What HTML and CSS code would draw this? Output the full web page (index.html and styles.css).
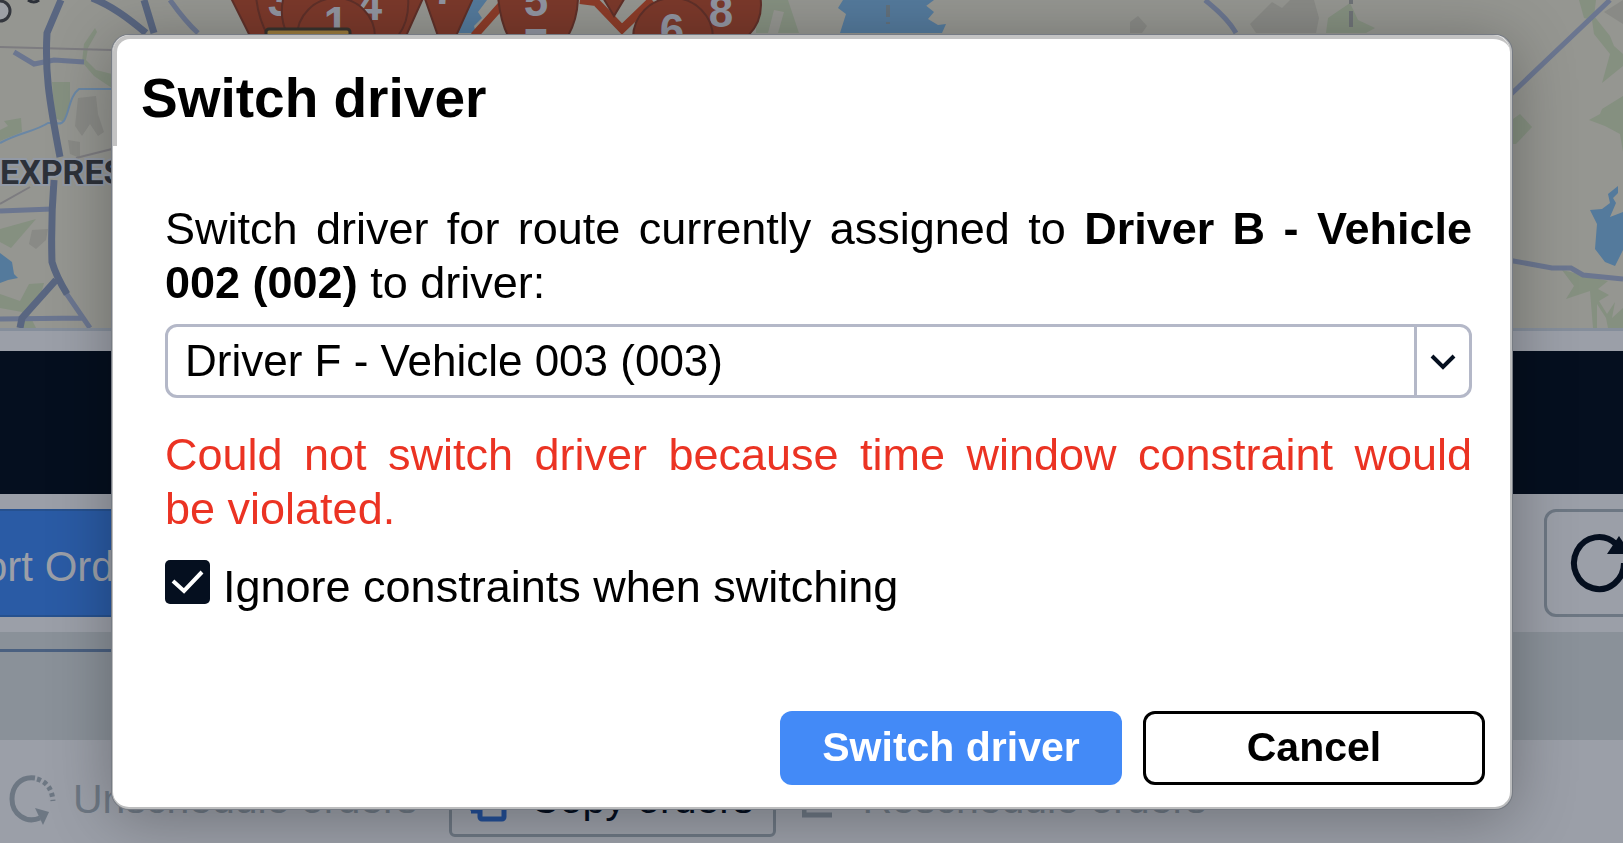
FILE: index.html
```
<!DOCTYPE html>
<html lang="en">
  <head>
    <meta charset="UTF-8" />
    <meta name="viewport" content="width=device-width, initial-scale=1.0" />
    <title>Switch driver</title>
    <link rel="stylesheet" href="styles.css">
  </head>
  <body>
    <!-- Route planner page behind the dialog -->
    <div class="page">
      <svg class="map" viewBox="0 0 1623 328" preserveAspectRatio="xMinYMin slice" aria-hidden="true">
        <rect width="1623" height="328" fill="#959691" />
        <!-- Parks and built-up areas -->
        <g fill="#859080">
          <path d="M95 28 L84 44 L82 62 L94 76 L112 88 L112 74 L96 70 L86 60 L88 48 L97 32Z" />
          <path d="M52 82 L70 82 L70 104 L64 122 L55 118Z" />
          <path d="M0 130 L8 126 L4 121 L21 118 L22 132 L0 141Z" />
          <path d="M0 229 L36 219 L11 248 L0 242Z" />
          <path d="M0 294 L20 301 L29 284 L44 283 L40 298 L28 312 L36 328 L20 328 L22 312 L0 308Z" />
          <path d="M756 0 L788 0 L799 33 L778 33 L784 12 L774 10 L768 33 L756 33Z" />
          <path d="M1326 33 L1328 18 L1350 3 L1358 20 L1375 28 L1366 33Z" />
          <path d="M1579 0 L1596 0 L1594 16 L1610 36 L1614 46 L1623 54 L1623 66 L1602 83 L1610 54 L1594 34 L1592 20 L1584 18Z" />
          <path d="M1623 96 L1602 109 L1600 114 L1589 120 L1605 126 L1620 134 L1623 152Z" />
          <path d="M1513 119 L1520 114 L1532 127 L1516 144 L1512 144Z" />
          <path d="M1562 270 L1608 281 L1598 289 L1609 295 L1599 301 L1607 314 L1615 302 L1612 318 L1623 308 L1623 328 L1608 328 L1606 318 L1597 304 L1597 328 L1593 328 L1590 291 L1566 299 L1574 286Z" />
        </g>
        <g fill="#898a86">
          <path d="M78 98 L96 96 L98 114 L104 132 L98 136 L90 124 L82 136 L75 126Z" />
          <path d="M68 140 L80 142 L80 158 L70 154Z" />
          <path d="M32 230 L48 229 L46 240 L36 249 L29 244Z" />
          <path d="M1250 24 L1272 2 L1282 8 L1290 0 L1314 0 L1319 18 L1316 33 L1256 33Z" />
          <path d="M1130 22 L1138 16 L1147 26 L1142 33 L1130 33Z" />
          <path d="M1604 12 L1623 0 L1623 24Z" />
        </g>
        <!-- Water -->
        <g fill="#547a9c">
          <path d="M0 253 L12 262 L14 274 L18 278 L8 280 L0 283Z" />
          <path d="M472 0 L454 33 L476 33 L474 26 L482 18 L478 12 L487 0Z" />
          <path d="M843 0 L926 0 L924 4 L934 12 L928 19 L938 25 L946 24 L942 33 L840 33 L846 14 L838 8Z" />
          <path d="M914 0 L934 0 L926 6Z" />
          <path d="M1618 186 L1618 193 L1613 198 L1616 203 L1610 217 L1623 212 L1623 250 L1615 266 L1605 262 L1595 249 L1597 224 L1590 210 L1602 209 L1610 203 L1608 194Z" />
        </g>
        <path d="M0 143 C20 132 34 132 48 123 L56 123 C70 128 66 98 79 89 H112" fill="none" stroke="#6a87a5" stroke-width="2" />
        <!-- Minor roads -->
        <g fill="none" stroke="#7d7c80" stroke-width="2">
          <path d="M0 47 L112 50 M76 158 L112 149 M0 204 L30 187" />
          <path d="M1351 0 V28" stroke="#6f7377" stroke-width="4" stroke-dasharray="4 7 16" />
          <path d="M888 5 V24" stroke="#62717d" stroke-width="4" stroke-dasharray="12 5" />
        </g>
        <!-- Highways -->
        <g fill="none" stroke="#6b7690" stroke-width="5">
          <path d="M14 52 L34 64 L54 60 L84 62 M0 211 L52 209 M0 319 L82 318 M66 293 L90 328 M170 0 C180 14 188 24 198 33" />
          <path d="M1205 0 C1220 12 1230 22 1236 33" />
          <path d="M1508 97 L1610 0 M1508 260 L1552 268 L1571 268 L1583 275 L1623 279" />
        </g>
        <g fill="none" stroke="#596681" stroke-width="7">
          <path d="M61 0 L47 33 C45 70 48 95 60 157 M54 180 C52 205 51 230 52 262 Q56 276 67 294 M56 280 L22 318 L20 328" />
          <path d="M92 -2 C112 6 128 18 146 33 M144 0 L154 33" />
        </g>
        <circle cx="0" cy="11" r="10" fill="#9ea1a7" stroke="#34373e" stroke-width="3" />
        <path d="M28 0 Q34 4 39 0" fill="none" stroke="#2c3038" stroke-width="3" />
        <text class="road-label" x="0" y="184">EXPRESSWAY</text>
        <!-- Planned route and its stops -->
        <path d="M474 36 L506 0 M580 0 L596 2 L622 29 L652 0" fill="none" stroke="#8c3c29" stroke-width="8" />
        <g class="stops">
          <path d="M230 -4 L250 36 H406 L424 -4Z" />
          <path d="M256 -4 Q258 18 268 36" />
          <path d="M408 -4 Q410 20 398 36" />
          <text x="280" y="16">3</text>
          <path d="M284 -4 Q278 16 288 36 H340 V-4Z" />
          <path d="M424 -4 L438 36 H456 L474 -4Z" />
          <text x="445" y="4">7</text>
          <text x="370" y="20">4</text>
          <circle cx="336" cy="37" r="39" />
          <text x="336" y="38">1</text>
          <path d="M602 -4 L614 16 L626 -4Z" />
          <circle cx="718" cy="5" r="43" />
          <text x="721" y="27">8</text>
          <path d="M498 -4 Q500 20 508 36 H568 Q578 18 578 -4Z" />
          <text x="536" y="16">5</text>
          <text x="536" y="60">7</text>
          <circle cx="673" cy="38" r="40" />
          <text x="672" y="45">6</text>
        </g>
        <rect x="266" y="29" width="84" height="12" rx="3" fill="#9b7b3d" stroke="#38332e" stroke-width="3" />
      </svg>

      <div class="map-edge"></div>
      <div class="timeline"></div>

      <div class="action-bar">
        <button class="import-button" type="button">Import Orders</button>
        <button class="refresh-button" type="button" aria-label="Refresh">
          <svg width="66" height="62" viewBox="0 0 66 62">
            <path d="M55 31 A25 26 0 1 1 47 12" fill="none" stroke="#050f1f" stroke-width="6" />
            <path d="M38 22 L50 4 L62 22Z" fill="#050f1f" />
          </svg>
        </button>
      </div>

      <div class="tab-panel"></div>

      <div class="order-bar">
        <button class="order-button" type="button" disabled>
          <svg class="order-icon" width="48" height="52" viewBox="0 0 48 52">
            <path d="M26 4 C11 2 3 13 3 25 C3 40 17 50 31 44" fill="none" stroke="#6d7783" stroke-width="5" />
            <path d="M28 5 C38 8 43 15 44 27" fill="none" stroke="#6d7783" stroke-width="5" stroke-dasharray="4 3" />
            <path d="M26 34 L40 38 L34 51Z" fill="#6d7783" />
          </svg>
          Unschedule orders
        </button>
        <button class="order-button order-button-active" type="button">
          <svg class="order-icon" width="40" height="46" viewBox="0 0 40 46">
            <path d="M3 34 V3 H24 V12 M10 34 H1" fill="none" stroke="#234f97" stroke-width="5" />
            <rect x="10" y="14" width="24" height="28" rx="2" fill="none" stroke="#234f97" stroke-width="5" />
          </svg>
          Copy orders
        </button>
        <button class="order-button" type="button" disabled>
          <svg class="order-icon" width="40" height="40" viewBox="0 0 40 40">
            <path d="M2 4 V35 H30" fill="none" stroke="#6d7783" stroke-width="5" />
          </svg>
          Reschedule orders
        </button>
      </div>
    </div>

    <!-- Switch driver dialog -->
    <div class="overlay">
      <form class="dialog" role="dialog" aria-labelledby="dialogTitle" onsubmit="return false">
        <div class="dialog-header">
          <h1 id="dialogTitle">Switch driver</h1>
        </div>
        <div class="dialog-body">
          <label class="message" for="driver">Switch driver for route currently assigned to <strong>Driver B - Vehicle 002 (002)</strong> to driver:</label>
          <div class="select-box">
            <select id="driver">
              <option>Driver F - Vehicle 003 (003)</option>
            </select>
            <span class="select-arrow">
              <svg width="26" height="18" viewBox="0 0 26 18">
                <path d="M2 4 L13 15 L24 4" fill="none" stroke="#050f1f" stroke-width="4" />
              </svg>
            </span>
          </div>
          <p class="message error">Could not switch driver because time window constraint would be&nbsp;violated.</p>
          <div class="check-row">
            <input type="checkbox" id="ignoreConstraints" checked />
            <label for="ignoreConstraints">Ignore constraints when switching</label>
          </div>
        </div>
        <div class="dialog-footer">
          <button class="primary" type="submit">Switch driver</button>
          <button class="secondary" type="button">Cancel</button>
        </div>
      </form>
    </div>
  </body>
</html>
```
FILE: styles.css
```
* {
  box-sizing: border-box;
}
body {
  margin: 0;
  font-family: "Liberation Sans", Arial, sans-serif;
  font-size: 45px;
  line-height: 54px;
  color: #000;
  background-color: #9b9fa8;
}
button,
select {
  font-family: inherit;
  cursor: pointer;
}

/* Page */
.page {
  height: 100vh;
  overflow: hidden;
}
.map {
  display: block;
  width: 100%;
  height: 328px;
}
.road-label {
  font-family: Roboto, sans-serif;
  font-size: 34px;
  font-weight: bold;
  fill: #2d3139;
  stroke: #9299a5;
  stroke-width: 4px;
  paint-order: stroke;
}
.stops path,
.stops circle {
  fill: #7b392b;
  stroke: #5f3029;
  stroke-width: 2px;
}
.stops text {
  font-size: 44px;
  font-weight: bold;
  fill: #9195a1;
  text-anchor: middle;
}
.map-edge {
  height: 23px;
  border-top: 3px solid #858e9b;
}
.timeline {
  height: 143px;
  background-color: #050f1f;
}
.action-bar {
  display: flex;
  justify-content: space-between;
  padding: 15px 0;
}
.import-button {
  height: 108px;
  margin-left: -120px;
  padding: 8px 32px 0;
  font-size: 42px;
  color: #9b9fa8;
  background-color: #2a5ba5;
  border: 2px solid #26518f;
  border-radius: 12px;
}
.refresh-button {
  display: flex;
  align-items: center;
  width: 110px;
  height: 108px;
  margin-right: -31px;
  padding: 0 22px;
  background: none;
  border: 3px solid #6d7783;
  border-radius: 12px;
}
.refresh-button svg {
  flex-shrink: 0;
}
.tab-panel {
  height: 108px;
  padding-top: 17px;
  background-color: #8a9199;
}
.tab-panel::before {
  content: "";
  display: block;
  width: 50%;
  height: 3px;
  background-color: #4a6080;
}
.order-bar {
  display: flex;
  gap: 26px;
  padding: 22px 9px;
}
.order-button {
  display: flex;
  align-items: center;
  gap: 16px;
  height: 75px;
  padding: 0 6px 0 0;
  font-size: 41px;
  white-space: nowrap;
  color: #6d7783;
  background: none;
  border: none;
}
.order-button-active {
  gap: 20px;
  padding: 0 20px 0 18px;
  color: #050f1f;
  border: 3px solid #6d7783;
  border-radius: 6px;
}
.order-button-active ~ .order-button {
  gap: 20px;
}
.order-icon {
  flex-shrink: 0;
}

/* Dialog */
.overlay {
  position: fixed;
  inset: 0;
  display: flex;
  align-items: center;
  justify-content: center;
  padding: 0 111px 0 112px;
}
.dialog {
  width: 100%;
  background-color: #fff;
  border: 2px solid #bcbdbe;
  border-top: none;
  border-left-width: 1px;
  border-radius: 17px;
  box-shadow: 0 0 0 1px #767b83, 0 8px 64px rgba(0, 0, 0, 0.3);
}
.dialog-header {
  padding: 28px 24px 17px;
  border-top: 4px solid #c3c3c3;
  border-left: 4px solid #c3c3c3;
  border-top-left-radius: 17px;
  border-top-right-radius: 17px;
}
.dialog-header h1 {
  margin: 0;
  font-size: 55px;
  line-height: 62px;
}
.dialog-body {
  padding: 56px 38px 0 52px;
}
.message {
  display: block;
  margin: 0;
  text-align: justify;
}
.error {
  color: #eb3323;
}
.select-box {
  position: relative;
  margin: 14px 0 30px;
}
.select-box select {
  display: block;
  width: 100%;
  height: 74px;
  padding: 0 72px 0 17px;
  font-size: 44px;
  color: #000;
  background-color: #fff;
  border: 3px solid #b4b8c8;
  border-radius: 12px;
  appearance: none;
}
.select-arrow {
  position: absolute;
  top: 3px;
  right: 3px;
  bottom: 3px;
  display: flex;
  align-items: center;
  justify-content: center;
  width: 55px;
  border-left: 3px solid #b4b8c8;
  pointer-events: none;
}
.check-row {
  display: flex;
  align-items: flex-start;
  gap: 13px;
  margin-top: 24px;
}
.check-row input {
  width: 45px;
  height: 44px;
  margin: 0;
  background: #050f1f url("data:image/svg+xml,%3Csvg xmlns='http://www.w3.org/2000/svg' viewBox='0 0 45 44'%3E%3Cpath d='M8 21 L19 31 L37 12' fill='none' stroke='white' stroke-width='4'/%3E%3C/svg%3E") center no-repeat;
  border-radius: 5px;
  appearance: none;
}
.dialog-footer {
  display: flex;
  justify-content: flex-end;
  gap: 21px;
  padding: 97px 25px 22px;
}
.dialog-footer button {
  width: 342px;
  height: 74px;
  padding: 0;
  font-size: 41px;
  font-weight: bold;
  border-radius: 12px;
}
.primary {
  color: #fff;
  background-color: #438af7;
  border: none;
}
.secondary {
  color: #000;
  background-color: #fff;
  border: 3px solid #000;
}
```
